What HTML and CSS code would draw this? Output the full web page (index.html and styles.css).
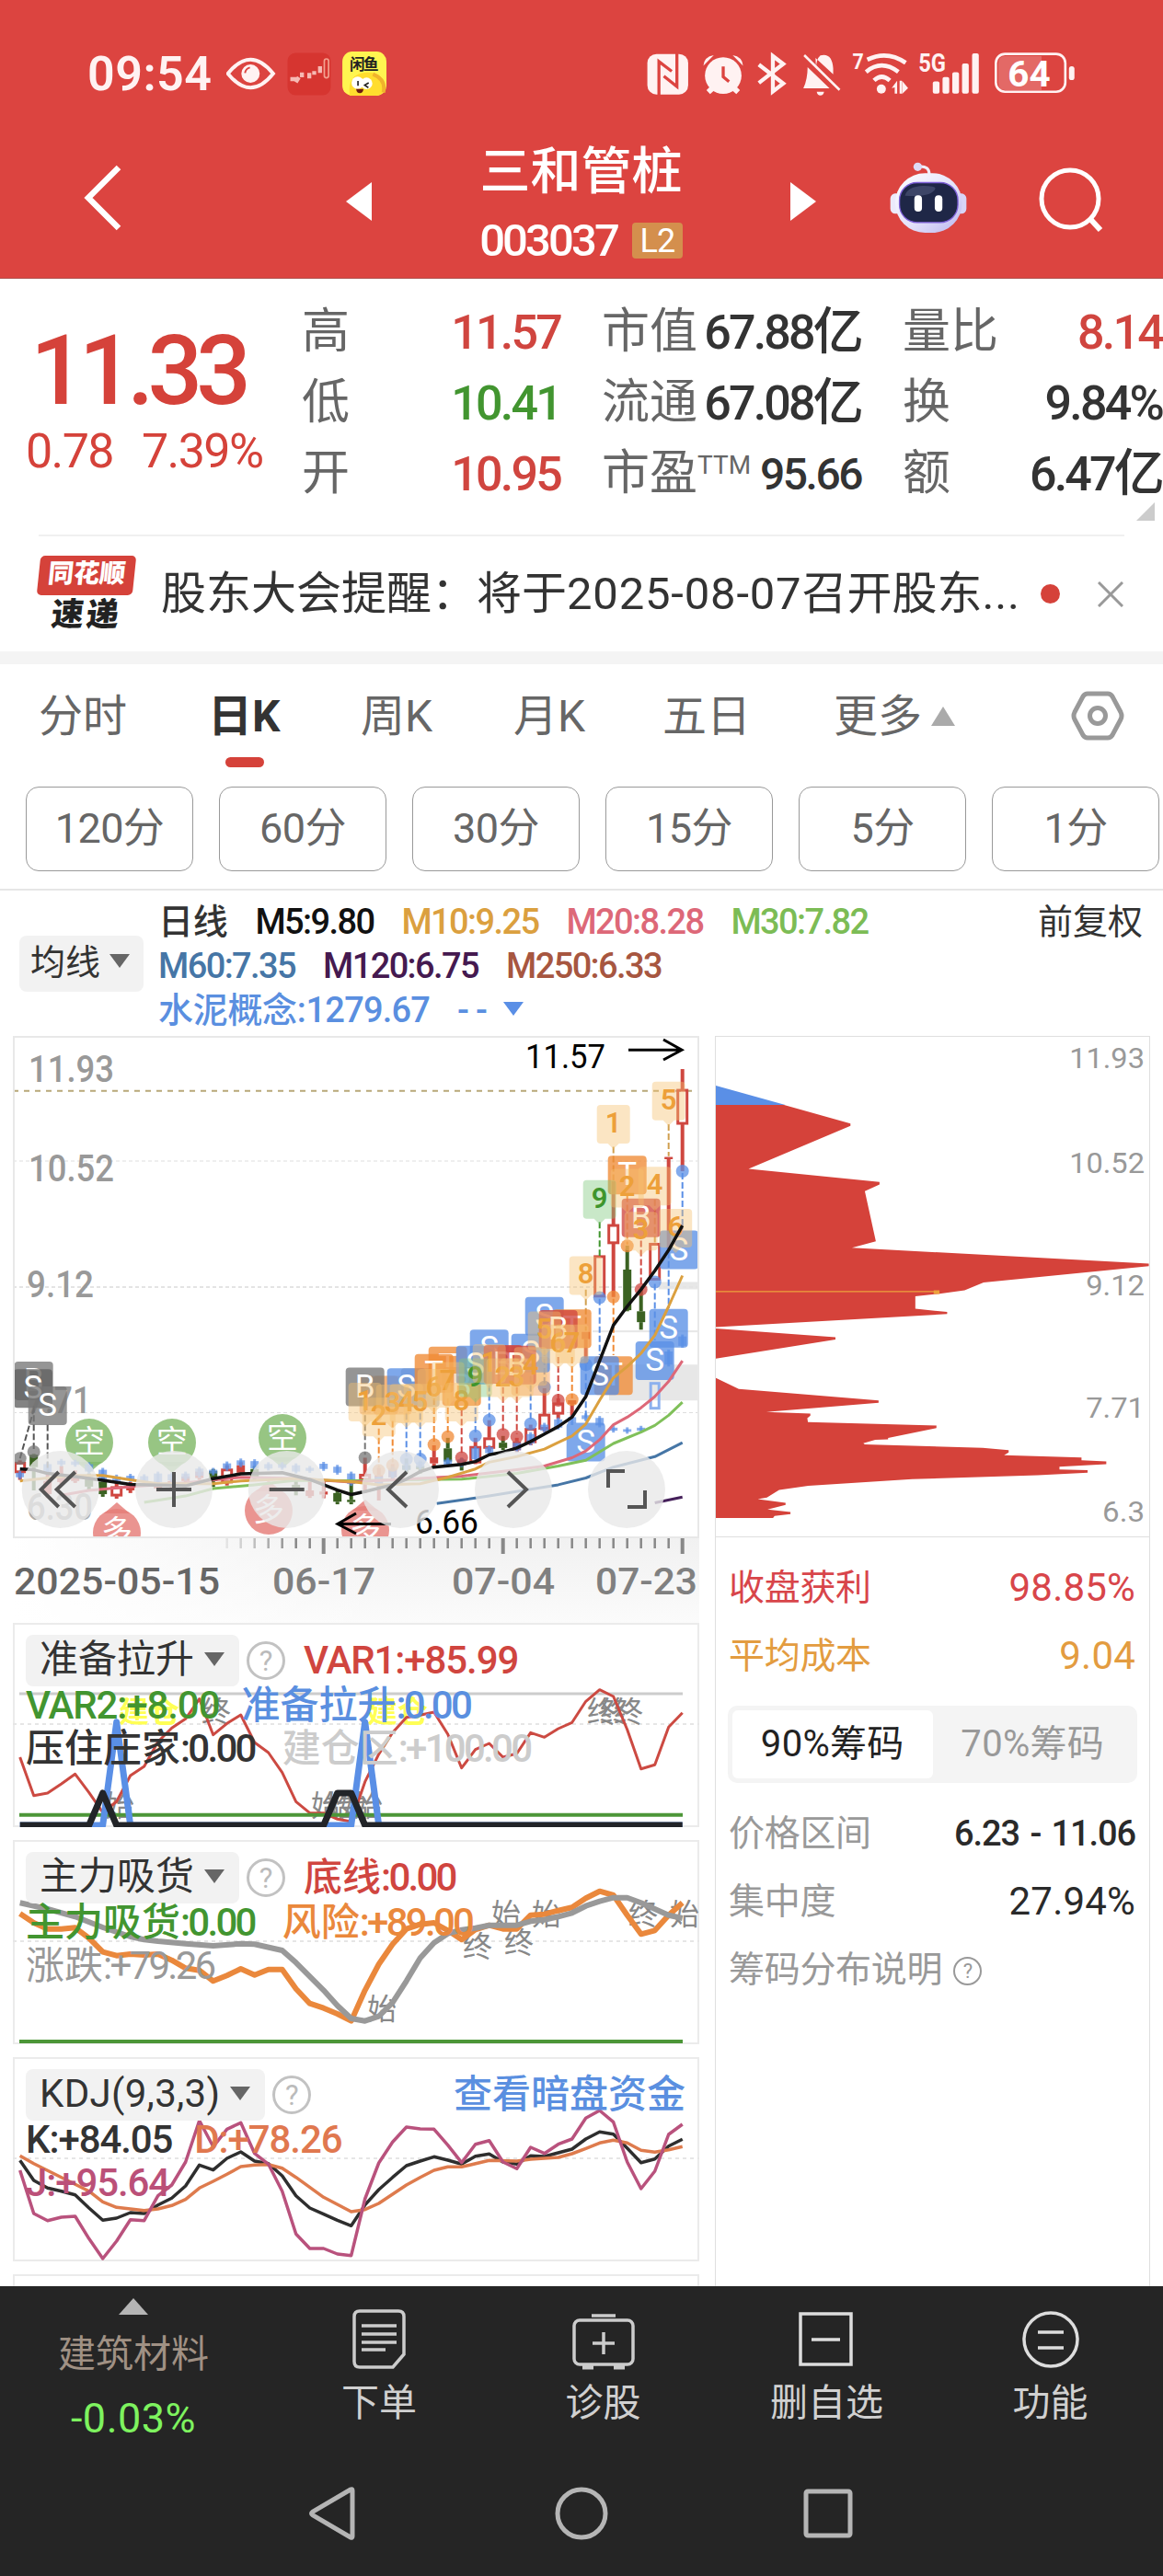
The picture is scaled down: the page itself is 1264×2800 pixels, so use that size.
FILE: index.html
```html
<!DOCTYPE html>
<html lang="zh-CN">
  <head>
    <meta charset="UTF-8">
    <title>三和管桩 003037</title>
    <link rel="stylesheet" href="styles.css">
  </head>
  <body>
    <div class="app">
      <header class="header">
        <div class="status">
          <span class="time">09:54</span>
          <svg class="status-left" viewBox="497 45 523 150">
            <path d="M502 120Q576 28 650 120Q576 212 502 120Z" fill="none" stroke="#fff2f2" stroke-width="12"/>
            <circle cx="576" cy="120" r="30" fill="#fff2f2"/>
            <path d="M558 118q2-14 16-18" fill="none" stroke="#dc4440" stroke-width="6"/>
            <rect x="697" y="52" width="141" height="139" rx="26" fill="#d63530"/>
            <path d="M706 138h22M724 148l10-16M744 116v16M768 118v18M784 112v12M803 96v22" stroke="#f6b9b3" stroke-width="13"/>
            <rect x="817" y="72" width="14" height="62" rx="7" fill="none" stroke="#f3a08f" stroke-width="5"/>
            <rect x="876" y="48" width="144" height="144" rx="32" fill="#fff550"/>
            <path d="M900 192q-10-74 58-76q54 0 56 50q-6 26-28 26z" fill="#ffdd2e"/>
            <path d="M976 122q44 18 34 60" fill="none" stroke="#f0b32c" stroke-width="12"/>
            <circle cx="926" cy="150" r="20" fill="#fff"/>
            <circle cx="955" cy="152" r="19" fill="#fff"/>
            <path d="M927 144v16M962 150l-13 8 12 8" fill="none" stroke="#222" stroke-width="5"/>
            <path d="M921 170h24q-2 14-12 14t-12-14z" fill="#6b1a12"/>
            <text x="900" y="108" font-size="50" font-weight="700" fill="#222" textLength="95">闲鱼</text>
          </svg>
          <svg class="status-right" viewBox="38 45 1404 148">
            <g fill="#fff2f2">
              <rect x="38" y="53" width="134" height="133" rx="30"/>
              <circle cx="287" cy="124" r="60"/>
              <path d="M222 92q2-30 34-35zM352 92q-2-30-34-35zM232 172l14-14 14 12-16 15zM342 172l-14-14-14 12 16 15z"/>
              <path d="M592 100q0-30 14-42 38-10 42 42v20l-58-54zM564 96q0 40-14 70h86z"/>
              <path d="M594 177h24q-2 12-12 12t-12-12z"/>
              <circle cx="806" cy="168" r="15"/>
              <path d="M840 165l18-24v42h-8v-20zM874 141l20 24-20 20zM866 141h7v42h-7z"/>
              <rect x="975" y="143" width="22" height="40" rx="6"/>
              <rect x="1007" y="129" width="22" height="54" rx="6"/>
              <rect x="1039" y="113" width="22" height="70" rx="6"/>
              <rect x="1071" y="84" width="22" height="99" rx="6"/>
              <rect x="1104" y="51" width="22" height="132" rx="6"/>
              <rect x="1422" y="93" width="18" height="46" rx="9"/>
              <text x="711" y="103" font-size="74" font-weight="700" textLength="37" lengthAdjust="spacingAndGlyphs">7</text>
              <text x="928" y="112" font-size="82" font-weight="700" textLength="90" lengthAdjust="spacingAndGlyphs">5G</text>
            </g>
            <g fill="none" stroke="#fff2f2" stroke-width="14">
              <path d="M404 88l80 62-34 26V60l34 26-80 62" stroke-width="13"/>
              <path d="M553 57l116 114" stroke-width="8"/>
              <path d="M760 72q64-32 126 10M756 112q50-42 106 0M782 140q25-24 52 0"/>
              <rect x="1182" y="53" width="228" height="124" rx="30" stroke-width="8"/>
            </g>
            <g fill="none" stroke="#dc4440" stroke-width="10">
              <path d="M76 190V78L118 110M135 48V160L92 126"/>
              <path d="M287 94v34l19 16"/>
            </g>
            <path d="M1212 60h120v112h-120q-22 0-22-24V84q0-24 22-24z" fill="#fff" opacity=".2"/>
            <text x="1221" y="160" font-size="118" font-weight="700" fill="#fff" textLength="140" lengthAdjust="spacingAndGlyphs">64</text>
          </svg>
        </div>
        <div class="nav">
          <svg class="back" viewBox="0 0 41 72"><path d="M38 3L5 36l33 33" fill="none" stroke="#fff" stroke-width="6.5"/></svg>
          <svg class="prev" viewBox="0 0 28 42"><path d="M28 0v42L0 21z" fill="#fff"/></svg>
          <div class="title">
            <h1>三和管桩</h1>
            <div class="code"><span>003037</span><em>L2</em></div>
          </div>
          <svg class="next" viewBox="0 0 28 42"><path d="M0 0v42l28-21z" fill="#fff"/></svg>
          <svg class="robot" viewBox="830 410 254 234">
            <defs>
              <linearGradient id="shell" x1="0" y1="0" x2="1" y2="1">
                <stop offset="0" stop-color="#fff"/><stop offset=".55" stop-color="#e4e2fa"/><stop offset="1" stop-color="#b9b4ee"/>
              </linearGradient>
            </defs>
            <path d="M928 424q32-2 32 26" fill="none" stroke="#f1eefc" stroke-width="9"/>
            <circle cx="922" cy="425" r="14" fill="#ded9f5"/>
            <rect x="832" y="513" width="36" height="66" rx="16" fill="#eceafb"/>
            <rect x="1046" y="513" width="36" height="66" rx="16" fill="#d8d5f6"/>
            <rect x="848" y="446" width="220" height="196" rx="98" fill="url(#shell)"/>
            <rect x="862" y="477" width="192" height="131" rx="58" fill="#1f2747" stroke="#7d5fd8" stroke-width="4"/>
            <path d="M880 520q8-30 60-32q40 0 40 8q-10 30-100 24z" fill="#5c6488" opacity=".5"/>
            <rect x="911" y="519" width="25" height="53" rx="12" fill="#fff"/>
            <rect x="978" y="519" width="25" height="53" rx="12" fill="#fff"/>
          </svg>
          <svg class="search" viewBox="0 0 70 72"><circle cx="34" cy="34" r="31" fill="none" stroke="#fff" stroke-width="5"/><path d="M55 55l12 13" stroke="#fff" stroke-width="6"/></svg>
        </div>
      </header>

      <section class="quote">
        <div class="price">
          <div class="last">11.33</div>
          <div class="change"><span>0.78</span><span>7.39%</span></div>
        </div>
        <div class="stats">
          <div><label>高</label><b class="up">11.57</b></div>
          <div><label>市值</label><b>67.88<u>亿</u></b></div>
          <div><label>量比</label><b class="up">8.14</b></div>
          <div><label>低</label><b class="down">10.41</b></div>
          <div><label>流通</label><b>67.08<u>亿</u></b></div>
          <div><label>换</label><b>9.84%</b></div>
          <div><label>开</label><b class="up">10.95</b></div>
          <div><label>市盈<sup>TTM</sup></label><b class="pe">95.66</b></div>
          <div><label>额</label><b>6.47<u>亿</u></b></div>
        </div>
        <i class="corner"></i>
      </section>

      <section class="news">
        <div class="news-logo">
          <span class="logo-top">同花顺</span>
          <span class="logo-bottom">速递</span>
        </div>
        <p>股东大会提醒：将于<span class="date">2025-08-07</span>召开股东<span class="date">...</span></p>
        <i class="dot"></i>
        <svg class="close" viewBox="0 0 28 28"><path d="M1 1l26 26M27 1L1 27" stroke="#999" stroke-width="3"/></svg>
      </section>

      <nav class="tabs">
        <span>分时</span>
        <span class="active">日K</span>
        <span>周K</span>
        <span>月K</span>
        <span>五日</span>
        <span>更多<i class="tri-up"></i></span>
        <svg class="hex" viewBox="0 0 58 54"><path d="M18 3h22q3 0 5 3l9 17q2 4 0 8l-9 17q-2 3-5 3H18q-3 0-5-3L4 31q-2-4 0-8l9-17q2-3 5-3z" fill="none" stroke="#999" stroke-width="5"/><circle cx="29" cy="27" r="8.5" fill="none" stroke="#999" stroke-width="5"/></svg>
      </nav>
      <div class="minutes">
        <span>120分</span><span>60分</span><span>30分</span><span>15分</span><span>5分</span><span>1分</span>
      </div>

      <section class="legend">
        <span class="pick">均线<i class="tri-down"></i></span>
        <div class="ma">
          <div><span class="cjk-dark">日线</span><span class="m5">M5:9.80</span><span class="m10">M10:9.25</span><span class="m20">M20:8.28</span><span class="m30">M30:7.82</span></div>
          <div><span class="m60">M60:7.35</span><span class="m120">M120:6.75</span><span class="m250">M250:6.33</span></div>
          <div><span class="idx">水泥概念:<span class="n">1279.67</span></span><span class="idx dash">--<i class="tri-down blue"></i></span></div>
        </div>
        <span class="adjust">前复权</span>
      </section>

      <main class="charts">
        <div class="left">
          <svg class="kline" id="kline" viewBox="0 0 746 546"></svg>
          <svg class="axis" id="axis" viewBox="0 0 746 92"></svg>

          <div class="panel">
            <svg id="pull" viewBox="0 0 746 222"></svg>
            <div class="row first"><span class="pick">准备拉升<i class="tri-down"></i></span><i class="help">?</i><span class="red w">VAR1:+85.99</span></div>
            <div class="row"><span class="green w">VAR2:+8.00</span><span class="blue-t">准备拉升<span class="n">:0.00</span></span></div>
            <div class="row wide"><span>压住庄家<span class="n">:0.00</span></span><span class="light">建仓区<span class="n">:+100.00</span></span></div>
          </div>

          <div class="panel">
            <svg id="main-force" viewBox="0 0 746 222"></svg>
            <div class="row first"><span class="pick">主力吸货<i class="tri-down"></i></span><i class="help">?</i><span class="red">底线<span class="n">:0.00</span></span></div>
            <div class="row wide"><span class="green">主力吸货<span class="n">:0.00</span></span><span class="orange">风险<span class="n">:+89.00</span></span></div>
            <div class="row"><span class="gray">涨跌<span class="n">:+79.26</span></span></div>
          </div>

          <div class="panel">
            <svg id="kdj" viewBox="0 0 746 222"></svg>
            <div class="row first"><span class="pick kdj-pick">KDJ(9,3,3)<i class="tri-down"></i></span><i class="help">?</i><span class="blue-t link">查看暗盘资金</span></div>
            <div class="row"><span class="w">K:+84.05</span><span class="d w">D:+78.26</span></div>
            <div class="row"><span class="j w">J:+95.64</span></div>
          </div>

          <div class="panel"></div>
        </div>

        <aside class="chips">
          <svg class="chip-chart" viewBox="0 0 472 543">
            <g transform="translate(-17.7 -6.5) scale(.3333 .3571)">
              <path fill="#5a8fe6" d="M53 165L280 224H53z"/>
              <path fill="#d5423a" d="M53 224H276L493 281V288L160 419L588 459V467L540 487L576 640L498 660L1468 708V716L928 766L866 790L784 800L705 808V846L809 856V862L53 902zM53 906L444 933V940L53 998zM53 1057L128 1091L585 1126V1133L218 1161L362 1166V1172L352 1180L354 1192L774 1202V1210L616 1240V1244L574 1246L535 1256L540 1260L925 1270L1010 1277V1284L995 1293L1248 1300V1308L1329 1312V1320L1176 1328V1336L1268 1338V1346L1105 1354L695 1366L355 1386L260 1399L220 1422L190 1427L281 1438V1444L222 1458L297 1466V1472L245 1478L240 1484H53z"/>
              <path fill="#eda23c" d="M53 792H765V790H784V801H765V795H53z"/>
            </g>
            <g class="chip-label">
              <text x="385" y="34" textLength="82" lengthAdjust="spacingAndGlyphs">11.93</text>
              <text x="385" y="148" textLength="82" lengthAdjust="spacingAndGlyphs">10.52</text>
              <text x="403" y="281" textLength="64" lengthAdjust="spacingAndGlyphs">9.12</text>
              <text x="403" y="414" textLength="64" lengthAdjust="spacingAndGlyphs">7.71</text>
              <text x="421" y="528" textLength="46" lengthAdjust="spacingAndGlyphs">6.3</text>
            </g>
          </svg>
          <div class="chip-info">
            <div class="line red"><span>收盘获利</span><b>98.85%</b></div>
            <div class="line amber"><span>平均成本</span><b>9.04</b></div>
            <div class="switch"><span class="on">90%筹码</span><span>70%筹码</span></div>
            <div class="line"><span>价格区间</span><b class="range">6.23 - 11.06</b></div>
            <div class="line"><span>集中度</span><b>27.94%</b></div>
            <div class="line"><span>筹码分布说明<i class="help small">?</i></span></div>
          </div>
        </aside>
      </main>

      <footer class="footer">
        <div class="toolbar">
          <div class="sector"><i class="tri-up"></i><span>建筑材料</span><b>-0.03%</b></div>
          <div class="tool">
            <svg viewBox="0 0 70 70"><g fill="none" stroke="#ccc" stroke-width="3.5"><path d="M14 5h42q6 0 6 6v41L50 66H14q-6 0-6-6V11q0-6 6-6z"/><path d="M16 21h38M16 30h38M16 39h38M16 47h26"/></g></svg>
            <span>下单</span>
          </div>
          <div class="tool">
            <svg viewBox="0 0 70 70"><g fill="none" stroke="#ccc" stroke-width="3.5"><rect x="3" y="15" width="64" height="48" rx="6"/><path d="M22 10h26M35 28v24M23 40h24"/><path d="M12 66h12M46 66h12" stroke-width="5"/></g></svg>
            <span>诊股</span>
          </div>
          <div class="tool">
            <svg viewBox="0 0 70 70"><g fill="none" stroke="#ddd" stroke-width="3.5"><path d="M6 8h55v55H6zM18 36h31"/></g></svg>
            <span>删自选</span>
          </div>
          <div class="tool">
            <svg viewBox="0 0 70 70"><g fill="none" stroke="#ddd" stroke-width="3.5"><circle cx="35" cy="36" r="29"/><path d="M21 28h28M21 45h28"/></g></svg>
            <span>功能</span>
          </div>
        </div>
        <div class="system">
          <svg viewBox="0 0 58 62"><path d="M50 6v50q0 2-2 1L7 33q-3-2 0-4L48 5q2-1 2 1z"/></svg>
          <svg viewBox="0 0 58 62"><circle cx="29" cy="31" r="26"/></svg>
          <svg viewBox="0 0 58 62"><rect x="3" y="7" width="48" height="48" rx="2"/></svg>
        </div>
      </footer>
    </div>
    <script src="chart.js"></script>
  </body>
</html>
```
FILE: styles.css
```css
html, body {
  margin: 0;
}

body {
  font-family: Roboto, "Noto Sans CJK SC", sans-serif;
  color: #333;
  background: #fff;
}

i, em, u {
  font-style: normal;
  text-decoration: none;
}

svg {
  display: block;
  flex: none;
}

svg text {
  font-family: Roboto, "Noto Sans CJK SC", sans-serif;
}

.app {
  width: 1264px;
  height: 2800px;
  display: flex;
  flex-direction: column;
  overflow: hidden;
}

.n {
  letter-spacing: -0.065em;
}

.w {
  letter-spacing: -1.1px;
}

/* header */
.header {
  height: 303px;
  flex: none;
  background: #dc4440;
  border-bottom: 1px solid #b0504c;
  box-sizing: border-box;
  color: #fff;
}

.status {
  height: 160px;
  display: flex;
  align-items: center;
  padding: 0 94px 0 95px;
}

.time {
  width: 151px;
  font-size: 52px;
  font-weight: 600;
  letter-spacing: 0.5px;
  color: #fff2f2;
}

.status-left {
  width: 174px;
  height: 50px;
}

.status-right {
  width: 468px;
  height: 49px;
  margin-left: auto;
}

.nav {
  height: 142px;
  display: flex;
  padding-left: 91px;
}

.back {
  width: 41px;
  height: 72px;
  margin-top: 19px;
}

.prev, .next {
  width: 28px;
  height: 42px;
  margin-top: 38px;
}

.prev {
  margin-left: 244px;
}

.title {
  width: 455px;
  text-align: center;
}

.title h1 {
  margin: -8px 0 0;
  font-size: 55px;
  line-height: 68px;
  font-weight: 500;
}

.code {
  display: flex;
  justify-content: center;
  align-items: center;
  gap: 16px;
  height: 46px;
  margin-top: 18px;
  font-size: 49px;
  font-weight: 500;
  letter-spacing: -2.9px;
}

.code em {
  width: 55px;
  height: 39px;
  line-height: 41px;
  border-radius: 4px;
  background: #d48f4d;
  font-size: 36px;
  font-weight: 400;
  letter-spacing: -1px;
}

.robot {
  width: 84px;
  height: 78px;
  margin: 16px 0 0 80px;
}

.search {
  width: 70px;
  height: 72px;
  margin: 22px 0 0 78px;
}

/* quote */
.quote {
  height: 278px;
  flex: none;
  position: relative;
  display: flex;
}

.price {
  width: 328px;
  color: #d5423a;
}

.last {
  margin: 38px 0 0 33px;
  font-size: 105px;
  line-height: 126px;
  font-weight: 500;
  letter-spacing: -7px;
}

.change {
  display: flex;
  gap: 31px;
  margin-left: 28px;
  font-size: 52px;
  line-height: 60px;
  margin-top: -6px;
  letter-spacing: -1.6px;
}

.stats {
  display: grid;
  grid-template-columns: 281px 282px 282px;
  grid-auto-rows: 77px;
  column-gap: 45px;
  margin-top: 18px;
  line-height: 60px;
}

.stats div {
  display: flex;
  justify-content: space-between;
  align-items: center;
  white-space: nowrap;
}

.stats label {
  padding-top: 3px;
  font-size: 52px;
  color: #666;
}

.stats sup {
  font-size: 28px;
  vertical-align: 17px;
  line-height: 0;
}

.stats b {
  padding-top: 4px;
  font-size: 52px;
  font-weight: 500;
  letter-spacing: -2.8px;
}

.stats u {
  font-size: 55px;
  line-height: 0;
}

.stats .pe {
  font-size: 48px;
  letter-spacing: -2.5px;
}

.up, .red {
  color: #d0453f;
}

.down, .green {
  color: #429530;
}

.corner {
  position: absolute;
  right: 9px;
  bottom: 15px;
  border: 10px solid transparent;
  border-right-color: #ccc;
  border-bottom-color: #ccc;
}

/* news */
.news {
  height: 125px;
  flex: none;
  display: flex;
  align-items: center;
  margin: 0 42px;
  border-top: 2px solid #f0f0f0;
}

.news-logo {
  width: 104px;
  height: 84px;
  text-align: center;
  font-weight: 900;
  line-height: 40px;
}

.logo-top, .logo-bottom {
  display: block;
  transform: skewX(-6deg);
}

.logo-top {
  height: 43px;
  border-radius: 5px;
  background: #d5423a;
  color: #fff;
  font-size: 28px;
}

.logo-bottom {
  font-size: 35px;
  line-height: 44px;
  letter-spacing: 3px;
  color: #222;
}

.news p {
  width: 946px;
  margin: 0 0 0 29px;
  font-size: 49px;
  line-height: 60px;
  white-space: nowrap;
}

.date {
  letter-spacing: 0.8px;
}

.dot {
  width: 21px;
  height: 21px;
  border-radius: 50%;
  background: #d5423a;
  margin-left: 10px;
}

.close {
  width: 28px;
  height: 28px;
  margin-left: 41px;
}

/* tabs */
.tabs {
  height: 118px;
  flex: none;
  display: flex;
  border-top: 14px solid #f4f4f4;
  padding-left: 42px;
  font-size: 48px;
  line-height: 114px;
  color: #666;
}

.tabs span {
  position: relative;
  width: 96px;
  margin-right: 88px;
  white-space: nowrap;
}

.tabs span:nth-child(2), .tabs span:nth-child(3) {
  width: 80px;
  margin-right: 86px;
}

.tabs span:nth-child(4) {
  width: 80px;
  margin-right: 82px;
}

.tabs span:nth-child(5) {
  margin-right: 90px;
}

.tabs .active {
  color: #333;
  font-weight: 700;
}

.tabs .active::after {
  content: "";
  position: absolute;
  left: 19px;
  top: 101px;
  width: 42px;
  height: 11px;
  border-radius: 6px;
  background: #d5423a;
}

.tri-up, .tri-down {
  display: inline-block;
  border: 11px solid transparent;
  border-top: 0;
  border-bottom: 15px solid #aaa;
}

.tri-down {
  border-bottom: 0;
  border-top: 15px solid #666;
  vertical-align: 7px;
}

.tabs .tri-up {
  border-width: 0 13px 21px;
  margin-left: 10px;
  vertical-align: 6px;
}

.hex {
  width: 58px;
  height: 54px;
  margin: 29px 0 0 74px;
}

.minutes {
  height: 128px;
  flex: none;
  display: flex;
  gap: 28px;
  padding: 15px 0 0 28px;
  box-sizing: border-box;
  border-bottom: 2px solid #e6e6e6;
  overflow: hidden;
}

.minutes span {
  flex: none;
  box-sizing: border-box;
  width: 182px;
  height: 92px;
  border: 1.5px solid #999;
  border-radius: 14px;
  text-align: center;
  line-height: 90px;
  font-size: 45px;
  letter-spacing: -0.6px;
  color: #666;
}

/* moving averages */
.legend {
  height: 158px;
  flex: none;
  display: flex;
  padding: 10px 22px 0 21px;
  box-sizing: border-box;
  font-size: 38px;
}

.legend .pick {
  width: 135px;
  height: 61px;
  line-height: 59px;
  margin: 39px 16px 0 0;
  padding-left: 12px;
  box-sizing: border-box;
  font-size: 38px;
}

.legend .pick .tri-down {
  margin-left: 10px;
}

.pick {
  background: #f2f2f2;
  border-radius: 8px;
  white-space: nowrap;
}

.ma {
  flex: 1;
  font-weight: 500;
}

.ma > div {
  display: flex;
  gap: 30px;
  height: 48px;
  line-height: 48px;
  letter-spacing: -1.6px;
}

.ma .idx, .ma .cjk-dark {
  letter-spacing: -0.3px;
}

.ma .idx .n {
  letter-spacing: -0.8px;
}

.ma .dash {
  letter-spacing: 7px;
}

.m5 { color: #111; }
.m10 { color: #dba03f; }
.m20 { color: #dd6878; }
.m30 { color: #7cbc55; }
.m60 { color: #4676a6; }
.m120 { color: #451a50; }
.m250 { color: #a75640; }
.idx { color: #5a8fe0; }

.tri-down.blue {
  border-top-color: #5a8fe6;
  margin-left: 10px;
}

.adjust {
  line-height: 48px;
}

/* charts */
.charts {
  flex: 1;
  min-height: 0;
  overflow: hidden;
  display: grid;
  grid-template-columns: 746px 473px;
  column-gap: 17px;
  padding-left: 14px;
}

.kline {
  width: 746px;
  height: 546px;
}

.axis {
  width: 746px;
  height: 92px;
  background: linear-gradient(90deg, #fff, rgba(255, 255, 255, 0) 55%), linear-gradient(#f1f1f1, #fbfbfb);
}

.panel {
  position: relative;
  box-sizing: border-box;
  height: 222px;
  margin-bottom: 14px;
  border: 2px solid #ebebeb;
  padding: 11px 0 0 12px;
  font-size: 42px;
  font-weight: 500;
}

.panel svg {
  position: absolute;
  left: -2px;
  top: -2px;
  width: 746px;
  height: 222px;
}

.row {
  position: relative;
  display: flex;
  gap: 24px;
  height: 47px;
  line-height: 42px;
  white-space: nowrap;
}

.row.wide {
  gap: 30px;
}

.row.first {
  height: 56px;
  line-height: 54px;
  gap: 8px;
  align-items: center;
}

.first .pick {
  padding: 0 16px 0 15px;
  height: 56px;
  font-weight: 400;
}

.first .pick .tri-down {
  margin-left: 11px;
}

.kdj-pick {
  letter-spacing: 0.3px;
}

.first .help + span {
  margin-left: 12px;
}

.first .link {
  margin-left: auto !important;
  margin-right: 13px;
}

.help {
  width: 36px;
  height: 36px;
  flex: none;
  line-height: 37px;
  border: 3px solid #c2c2c2;
  border-radius: 50%;
  text-align: center;
  font-size: 31px;
  font-weight: 400;
  color: #bbb;
}

.blue-t { color: #5a8fe0; }
.light { color: #ccc; }
.orange { color: #ea883c; }
.gray { color: #999; font-weight: 400; }
.d { color: #e0784f; }
.j { color: #bb5078; }

/* chip distribution */
.chips {
  border: 1px solid #dfdfdf;
  border-bottom: 0;
  box-sizing: border-box;
}

.chip-chart {
  width: 471px;
  height: 543px;
  border-bottom: 1px solid #dfdfdf;
}

.chip-label {
  fill: #999;
  font-size: 32px;
}

.chip-info {
  padding: 18px 13px 0;
  font-size: 39px;
  color: #999;
}

.line {
  display: flex;
  justify-content: space-between;
  height: 74px;
  line-height: 74px;
  padding: 0 2px 0 1px;
  letter-spacing: -0.3px;
}

.line b {
  font-weight: 400;
  font-size: 42px;
  letter-spacing: 0.2px;
  color: #2a2a2a;
}

.line .range {
  font-weight: 500;
  font-size: 38px;
  letter-spacing: -1.1px;
  word-spacing: 3px;
}

.line.red, .line.red b {
  color: #d8454a;
}

.line.amber, .line.amber b {
  color: #e39c40;
}

.switch {
  display: flex;
  box-sizing: border-box;
  height: 84px;
  margin: 17px 0 18px;
  padding: 5px;
  border-radius: 10px;
  background: #f4f4f4;
}

.switch span {
  flex: 1;
  line-height: 74px;
  text-align: center;
  font-size: 40px;
  letter-spacing: 0.3px;
}

.switch .on {
  border-radius: 6px;
  background: #fff;
  color: #222;
}

.help.small {
  display: inline-block;
  width: 27px;
  height: 27px;
  line-height: 28px;
  border-width: 2px;
  border-color: #999;
  color: #999;
  font-size: 22px;
  margin-left: 12px;
  vertical-align: 4px;
}

/* bottom */
.footer {
  height: 315px;
  flex: none;
  background: #252525;
}

.toolbar {
  display: grid;
  grid-template-columns: 290px 244px 243px 243px 243px;
  height: 185px;
}

.tool, .sector {
  display: flex;
  flex-direction: column;
  align-items: center;
  font-size: 41px;
  line-height: 50px;
  color: #d0d0d0;
}

.tool svg {
  width: 70px;
  height: 70px;
  margin: 22px 0 10px;
}

.sector .tri-up {
  border-width: 0 16px 18px;
  border-bottom-color: #b5b5b5;
  margin: 13px 0 18px;
}

.sector span {
  color: #a09184;
}

.sector b {
  margin-top: 20px;
  font-size: 45px;
  font-weight: 400;
  letter-spacing: 0.5px;
  color: #7ef35f;
}

.system {
  display: flex;
  padding: 31px 0 0 333px;
  gap: 212px;
}

.system svg {
  width: 58px;
  height: 62px;
  fill: none;
  stroke: #b5b5b5;
  stroke-width: 5;
}
```
FILE: chart.js
```js
(function() {
  var NS = 'http://www.w3.org/2000/svg';
  var RED = '#cf4740', GREEN = '#3b6222', BLUE = '#5a8fe6', ORANGE = '#f08a35', GRAY = '#777';

  function el(parent, name, attrs, text) {
    var node = document.createElementNS(NS, name);
    for (var k in attrs) node.setAttribute(k, attrs[k]);
    if (text) node.textContent = text;
    parent.appendChild(node);
    return node;
  }

  function x(i) { return 7.7 + 15 * i; }

  // points: [index, level, index, level, ...]
  function curve(svg, points, y, color, width) {
    var d = '';
    for (var i = 0; i < points.length; i += 2) {
      d += (i ? 'L' : 'M') + x(points[i]).toFixed(1) + ' ' + y(points[i + 1]).toFixed(1);
    }
    el(svg, 'path', { d: d, fill: 'none', stroke: color, 'stroke-width': width, 'stroke-linejoin': 'round' });
  }

  // one level per candle
  function series(svg, levels, y, color, width) {
    var points = [];
    levels.forEach(function(v, i) { points.push(i, v); });
    curve(svg, points, y, color, width);
  }

  function hline(svg, y, color, width, dash, x1, x2) {
    el(svg, 'line', { x1: x1 || 0, x2: x2 || 746, y1: y, y2: y, stroke: color, 'stroke-width': width, 'stroke-dasharray': dash || 'none' });
  }

  function label(svg, str, lx, ly, size, color, length, weight) {
    var attrs = { x: lx, y: ly, 'font-size': size, fill: color, 'font-weight': weight || 400 };
    if (length) {
      attrs.textLength = length;
      attrs.lengthAdjust = 'spacingAndGlyphs';
    } else {
      attrs['text-anchor'] = 'middle';
    }
    el(svg, 'text', attrs, str);
  }

  /* ---- candles ---- */
  var k = document.getElementById('kline');
  function y(v) { return v / 2.45 - 6; }

  el(k, 'rect', { x: 648, y: y(890), width: 96, height: 39, fill: '#e7e7e7' });
  el(k, 'rect', { x: 702, y: y(670), width: 42, height: 8, fill: '#e7e7e7' });
  el(k, 'rect', { x: 630, y: y(799), width: 114, height: 2, fill: '#e7e7e7' });
  hline(k, 136, '#dedede', 1, '4 3');
  hline(k, 273, '#e4e4e4', 2, '4 3');
  hline(k, 409.5, '#dedede', 1, '4 3');
  hline(k, 59.7, '#b8a878', 2, '6 6');
  label(k, '11.93', 17, 50, 40, '#999', 93, 500);
  label(k, '10.52', 17, 158, 40, '#999', 93, 500);
  label(k, '9.12', 15, 284, 40, '#999', 73, 500);
  label(k, '7.71', 15, 410, 40, '#999', 70, 500);
  label(k, '6.30', 15, 526, 40, '#aaa', 72, 500);

  // square mark with a letter
  function badge(i, top, letter, color) {
    var cx = x(i), ty = y(top);
    el(k, 'rect', { x: cx - 21, y: ty, width: 42, height: 42, rx: 4, fill: color, opacity: letter ? 0.78 : 0.4 });
    if (letter) label(k, letter, cx, ty + 32, 35, '#fff', 0, 400);
  }

  // day counter bubble
  function count(i, mid, str, green, shift) {
    var cx = x(i) + (shift || 0), ty = y(mid) - 19;
    el(k, 'path', {
      d: 'M' + (cx - 14) + ' ' + ty + 'h28q4 0 4 4v34q0 4-4 4h-8l-6 6-6-6h-8q-4 0-4-4v-34q0-4 4-4z',
      fill: green ? '#7fc77b' : '#f6c070', opacity: 0.42
    });
    label(k, str, cx, y(mid) + 11, 31, green ? '#3f952d' : '#eda03a', 0, 600);
  }

  function stem(i, from, to, color) {
    el(k, 'line', { x1: x(i), x2: x(i), y1: y(from), y2: y(to), stroke: color, 'stroke-width': 2, 'stroke-dasharray': '7 3' });
  }

  function ring(i, at, color) {
    el(k, 'circle', { cx: x(i), cy: y(at), r: 7, fill: color, opacity: 0.75 });
  }

  function candle(i, high, top, bottom, low, color, hollow) {
    var cx = x(i);
    el(k, 'line', { x1: cx, x2: cx, y1: y(high), y2: y(top), stroke: color, 'stroke-width': 4 });
    el(k, 'line', { x1: cx, x2: cx, y1: y(bottom), y2: y(low), stroke: color, 'stroke-width': 4 });
    el(k, 'rect', {
      x: cx - (hollow ? 5 : 4.5), y: y(top) + (hollow ? 1 : 0), width: hollow ? 10 : 9,
      height: Math.max(2, (bottom - top) / 2.45 - (hollow ? 2 : 0)),
      fill: hollow ? 'none' : color, stroke: hollow ? color : 'none', 'stroke-width': 3
    });
  }

  function signal(cx, cy, str, color, up) {
    var t = up ? -1 : 1;
    el(k, 'circle', { cx: cx, cy: cy, r: 26, fill: color, opacity: 0.82 });
    el(k, 'path', { d: 'M' + (cx - 14) + ' ' + (cy + 21 * t) + 'L' + cx + ' ' + (cy + 33 * t) + 'L' + (cx + 14) + ' ' + (cy + 21 * t) + 'z', fill: color, opacity: 0.82 });
    label(k, str, cx, cy + 11, 34, '#fff', 0, 400);
  }

  signal(83, 442, '空', '#80b868');
  signal(173, 442, '空', '#80b868');
  signal(293, 437, '空', '#80b868');
  signal(113, 540, '多', '#e57d78', true);
  signal(278, 516, '多', '#e57d78', true);
  signal(383, 537, '多', '#e57d78', true);

  [
    [0, 1145, 1150, 1178, 1197, RED, 1], [1, 1128, 1130, 1163, 1225, GREEN], [2, 1180, 1200, 1235, 1245, RED],
    [3, 1160, 1185, 1203, 1210, RED], [4, 1172, 1185, 1200, 1205, RED], [5, 1180, 1190, 1215, 1225, GREEN],
    [6, 1190, 1202, 1235, 1242, GREEN], [7, 1200, 1215, 1240, 1247, RED, 1], [8, 1203, 1208, 1225, 1232, RED],
    [10, 1200, 1206, 1220, 1228, RED], [11, 1195, 1200, 1212, 1220, RED], [12, 1182, 1188, 1200, 1206, RED], [13, 1168, 1175, 1192, 1197, RED],
    [14, 1168, 1173, 1200, 1216, GREEN], [15, 1158, 1168, 1205, 1212, RED, 1], [16, 1150, 1158, 1178, 1182, RED],
    [17, 1160, 1168, 1190, 1198, GREEN], [20, 1195, 1210, 1222, 1238, GREEN], [21, 1200, 1225, 1240, 1245, RED],
    [22, 1200, 1228, 1236, 1246, RED], [23, 1225, 1232, 1255, 1262, GREEN], [24, 1195, 1250, 1256, 1262, GREEN],
    [25, 1138, 1182, 1198, 1232, RED, 1], [26, 1165, 1185, 1210, 1252, RED], [27, 1155, 1170, 1190, 1198, RED],
    [28, 1140, 1158, 1170, 1178, GREEN], [29, 1148, 1160, 1168, 1180, GREEN],
    [30, 1105, 1137, 1153, 1162, RED], [31, 1085, 1113, 1148, 1155, GREEN], [32, 1140, 1145, 1158, 1172, GREEN],
    [33, 1085, 1108, 1152, 1155, RED, 1], [34, 1038, 1085, 1113, 1122, RED, 1], [35, 1080, 1098, 1112, 1118, GREEN],
    [36, 1085, 1095, 1118, 1123, RED], [37, 1050, 1060, 1098, 1105, RED, 1], [38, 953, 1022, 1062, 1068, RED, 1],
    [39, 980, 992, 1022, 1035, RED, 1], [40, 985, 985, 995, 1032, RED], [41, 803, 803, 822, 888, RED],
    [42, 600, 600, 710, 710, RED, 1], [43, 402, 517, 568, 710, RED, 1], [44, 573, 637, 745, 748, GREEN],
    [45, 690, 748, 777, 797, GREEN], [46, 567, 567, 665, 665, RED, 1], [47, 337, 337, 343, 582, RED],
    [48, 103, 157, 250, 375, RED, 1]
  ].forEach(function(c) { candle.apply(null, c); });

  // index overlay
  [[0, 1178, 1190], [2, 1155, 1178], [3, 1146, 1156], [4, 1148, 1157], [5, 1155, 1175], [6, 1170, 1196], [7, 1188, 1200], [8, 1186, 1198],
    [9, 1187, 1202], [10, 1180, 1203], [11, 1182, 1198], [12, 1180, 1194], [13, 1167, 1186], [14, 1170, 1180], [15, 1153, 1168], [16, 1145, 1158],
    [17, 1147, 1166], [18, 1155, 1167], [19, 1155, 1165], [20, 1158, 1175], [21, 1165, 1173], [22, 1154, 1168],
    [23, 1162, 1178], [24, 1180, 1208], [26, 1188, 1210], [27, 1165, 1190], [28, 1158, 1170], [29, 1150, 1165],
    [31, 1143, 1158], [32, 1142, 1158], [33, 1112, 1142], [34, 1110, 1126], [36, 1098, 1118], [37, 1075, 1100],
    [38, 1050, 1066], [39, 1036, 1058], [40, 1030, 1046], [41, 1025, 1035], [42, 1032, 1052], [43, 1058, 1066],
    [44, 1062, 1069], [45, 1058, 1066], [47, 855, 890], [48, 815, 840]
  ].forEach(function(b) {
    el(k, 'rect', { x: x(b[0]) - 4.5, y: y(b[1]), width: 9, height: (b[2] - b[1]) / 2.45, fill: BLUE, opacity: 0.72 });
    el(k, 'line', { x1: x(b[0]), x2: x(b[0]), y1: y(b[1] - 5), y2: y(b[2] + 5), stroke: BLUE, 'stroke-width': 3, opacity: 0.72 });
  });
  el(k, 'rect', { x: x(46) - 4.5, y: y(940), width: 9, height: 27, fill: 'none', stroke: '#8db1ee', 'stroke-width': 3 });

  // stems between a candle and its badges
  el(k, 'line', { x1: x(0), y1: y(1140), x2: x(1), y2: y(1010), stroke: '#555', 'stroke-width': 2, 'stroke-dasharray': '7 3' });
  [[1, 1000, 1115, '#555'], [2, 1050, 1165, '#555'], [25, 1000, 1130, '#777'], [26, 1060, 1165, ORANGE], [27, 1040, 1150, ORANGE],
    [28, 1020, 1135, BLUE], [29, 1020, 1140, BLUE], [30, 980, 1095, ORANGE], [31, 980, 1075, ORANGE],
    [32, 1010, 1130, RED], [33, 980, 1070, BLUE], [34, 920, 1030, BLUE], [35, 950, 1070, RED], [36, 950, 1075, RED],
    [37, 920, 1040, BLUE], [38, 850, 940, BLUE], [39, 870, 980, RED], [40, 870, 980, ORANGE], [41, 690, 800, '#d0a050'], [41, 890, 1040, BLUE],
    [42, 510, 600, '#3f952d'], [42, 715, 865, BLUE], [43, 310, 400, '#d0a050'], [43, 715, 865, ORANGE],
    [44, 440, 570, ORANGE], [45, 560, 690, RED], [46, 450, 565, '#d0a050'], [46, 675, 825, BLUE], [47, 250, 335, '#d0a050'],
    [47, 590, 740, BLUE], [48, 380, 530, BLUE]
  ].forEach(function(s) { stem.apply(null, s); });

  [[0, 1140, GRAY], [1, 1122, GRAY], [25, 1138, GRAY], [26, 1172, ORANGE], [27, 1158, ORANGE], [28, 1142, BLUE], [29, 1142, BLUE],
    [30, 1103, ORANGE], [31, 1082, ORANGE], [32, 1138, RED], [33, 1080, BLUE], [34, 1038, BLUE],
    [35, 1076, RED], [36, 1082, RED], [37, 1048, BLUE], [38, 950, BLUE], [39, 985, RED], [40, 983, ORANGE],
    [41, 890, BLUE], [42, 712, BLUE], [43, 710, ORANGE], [44, 574, ORANGE], [45, 690, RED], [46, 670, BLUE], [48, 375, BLUE]
  ].forEach(function(r) { ring.apply(null, r); });

  [[26, 920, '', ORANGE], [27, 920, '', ORANGE], [29, 900, '', GRAY], [37, 870, '', ORANGE],
    [1, 882, 'B', GRAY], [0.95, 902, 'S', '#606060'], [2, 948, 'S', GRAY], [25, 898, 'B', GRAY],
    [28, 900, 'S', BLUE], [31, 842, 'T', ORANGE], [30, 862, 'T', ORANGE], [32, 897, 'B', ORANGE],
    [34, 797, 'S', BLUE], [33, 840, 'S', BLUE], [37, 808, 'S', BLUE], [35, 838, 'B', RED], [36, 840, 'B', RED],
    [38, 710, 'S', BLUE], [40, 743, 'T', ORANGE], [39, 745, 'B', RED], [43, 868, 'T', ORANGE], [42, 868, 'S', BLUE],
    [41, 1045, 'S', BLUE], [46, 828, 'S', BLUE], [47, 742, 'S', BLUE], [47.75, 533, 'S', BLUE],
    [44, 334, 'T', ORANGE], [45, 448, 'B', RED]
  ].forEach(function(b) { badge.apply(null, b); });

  [[25, 985, '1'], [26, 1025, '2'], [27, 990, '3'], [28, 988, '4'], [29, 988, '5'], [30, 948, '6'], [31, 930, '7'],
    [32, 985, '8'], [33, 920, '9', true], [34, 882, '1'], [35, 920, '2'], [36, 920, '3'], [37, 890, '4'],
    [38, 795, '5'], [39, 830, '6'], [40, 830, '7'], [41, 648, '8'], [42, 445, '9', true], [43, 245, '1'],
    [44, 415, '2'], [45, 530, '3'], [46, 410, '4'], [47, 183, '5'], [47.5, 522, '6']
  ].forEach(function(c) { count.apply(null, c); });

  curve(k, [46, 1258, 48, 1243], y, '#45205a', 3);
  curve(k, [30.2, 1260, 34, 1240, 37, 1222, 39, 1210, 41, 1192, 43, 1163, 46, 1135, 48, 1098], y, '#4676a6', 3);
  curve(k, [9, 1257, 12, 1240, 14, 1220, 17, 1210, 20, 1198, 24, 1199, 28, 1197, 32, 1195, 36, 1180, 39, 1160, 41, 1145, 43, 1100, 45, 1070, 46, 1052, 47, 1025, 48, 990], y, '#80c05a', 3);
  curve(k, [3, 1238, 5, 1225, 8, 1215, 12, 1205, 16, 1190, 20, 1193, 24, 1203, 28, 1195, 32, 1187, 36, 1170, 38, 1160, 40, 1138, 41, 1120, 42, 1090, 43, 1050, 44, 1030, 45, 1005, 46, 975, 47, 935, 48, 880], y, '#dd6878', 3);
  curve(k, [0, 1200, 2, 1192, 4, 1185, 6, 1185, 8, 1197, 10, 1207, 14, 1207, 16, 1200, 20, 1193, 24, 1202, 26, 1210, 29, 1207, 31, 1190, 33, 1168, 34, 1150, 36, 1135, 38, 1115, 39, 1097, 40, 1080, 41, 1048, 42, 985, 43, 925, 44, 895, 45, 860, 46, 812, 47, 735, 48, 653], y, '#dba03f', 3);
  curve(k, [0, 1168, 1, 1170, 2, 1180, 4, 1188, 6, 1198, 8, 1209, 12, 1213, 14, 1194, 16, 1181, 19, 1178, 21, 1196, 22, 1210, 23, 1224, 24, 1236, 25, 1228, 27, 1210, 28, 1195, 29, 1175, 30, 1163, 32, 1156, 33, 1148, 34, 1130, 35, 1123, 36, 1112, 37, 1095, 38, 1075, 39, 1055, 40, 1030, 41, 975, 42, 880, 43, 785, 44, 735, 45, 690, 46, 640, 47, 585, 48, 520], y, '#111', 3.5);

  // high / low marks
  el(k, 'path', { d: 'M669 15.3H727M707 4L727 15.3L707 26', fill: 'none', stroke: '#000', 'stroke-width': 3 });
  label(k, '11.57', 557, 35, 36, '#000', 87);
  el(k, 'path', { d: 'M411 530.5H353M373 519L353 530.5L373 541', fill: 'none', stroke: '#000', 'stroke-width': 3 });
  label(k, '6.66', 437, 541, 36, '#000', 69);

  // round buttons
  var icons = [
    [51.7, 'M16-19L-4 0L16 19M-2-19L-21 0L-2 19'], [175, 'M0-19V19M-19 0H19'], [297.7, 'M-19 0H19'],
    [421, 'M7-19L-13 0L7 19'], [544, 'M-6-19L14 0L-6 19'], [667, 'M-20-2V-20H-2M20 1V19H1']
  ];
  icons.forEach(function(b) {
    el(k, 'circle', { cx: b[0], cy: 493, r: 42, fill: '#e9e9e9', opacity: 0.8 });
    el(k, 'path', { d: b[1], transform: 'translate(' + b[0] + ' 493)', fill: 'none', stroke: '#555', 'stroke-width': 4 });
  });
  el(k, 'rect', { x: 1, y: 1, width: 744, height: 544, fill: 'none', stroke: '#e8e8e8', 'stroke-width': 2 });

  /* ---- dates ---- */
  var axis = document.getElementById('axis');
  for (var i = 15; i < 49; i++) {
    var major = i == 22 || i == 35 || i == 48;
    el(axis, 'line', { x1: x(i), x2: x(i), y1: 0, y2: major ? 17 : 11, stroke: '#888', 'stroke-width': major ? 4 : 2.5, opacity: major ? 1 : Math.min(1, (i - 14) / 6) });
  }
  label(axis, '2025-05-15', 1, 61, 40, '#666', 224, 500);
  label(axis, '06-17', 282, 61, 40, '#808080', 112, 500);
  label(axis, '07-04', 477, 61, 40, '#808080', 112, 500);
  label(axis, '07-23', 633, 61, 40, '#808080', 111, 500);

  /* ---- indicator 1 ---- */
  var p = document.getElementById('pull');
  function y1(v) { return v / 3 - 24; }
  hline(p, y1(402), '#e6e6e6', 2, '4 4');
  hline(p, y1(303), '#ccc', 3, '', 7, 728);
  label(p, '建仓', 148, 108, 33, '#ffff55', 0, 700);
  label(p, '建仓', 418, 108, 33, '#ffff55', 0, 700);
  [['终', 221, 108], ['终', 640, 108], ['终', 654, 108], ['终', 669, 108], ['始', 116, 210], ['始', 340, 210],
    ['始', 356, 210], ['始', 371, 210], ['始', 386, 210]].forEach(function(t) { label(p, t[0], t[1], t[2], 32, '#888'); });
  series(p, [510, 635, 627, 597, 565, 625, 690, 655, 570, 540, 460, 415, 385, 320, 437, 400, 372, 462, 495, 560, 655, 692, 692, 712, 720,
    590, 500, 430, 380, 373, 363, 435, 545, 485, 465, 510, 498, 430, 445, 417, 397, 328, 290, 312, 420, 548, 535, 412, 365], y1, '#cc4a42', 3);
  hline(p, y1(698), '#4c9638', 4, '', 7, 728);
  curve(p, [0, 732, 6, 732, 7, 395, 8, 732, 24, 732, 25, 395, 26, 732, 48, 732], y1, BLUE, 7);
  curve(p, [0, 732, 5, 732, 6, 627, 7, 732, 22, 732, 23, 627, 24, 627, 25, 732, 48, 732], y1, '#222428', 7);

  /* ---- indicator 2 ---- */
  var m = document.getElementById('main-force');
  function y2(v) { return v / 3 - 260; }
  hline(m, y2(1110), '#e6e6e6', 2, '4 4');
  hline(m, 219, '#4c9638', 4, '', 7, 728);
  [['始', 536, 92], ['始', 580, 92], ['终', 685, 92], ['始', 730, 92], ['终', 505, 127], ['终', 550, 123], ['始', 401, 195]]
    .forEach(function(t) { label(m, t[0], t[1], t[2], 32, '#888'); });
  series(m, [1020, 1050, 1070, 1070, 1066, 1100, 1145, 1157, 1152, 1155, 1152, 1172, 1198, 1205, 1240, 1222, 1200, 1220, 1202, 1202, 1265,
    1313, 1328, 1347, 1370, 1270, 1185, 1120, 1070, 1055, 1050, 1075, 1105, 1072, 1058, 1070, 1070, 1025, 1022, 1010, 1000, 970, 947, 960,
    1025, 1087, 1075, 1025, 985], y2, '#ea883c', 6);
  curve(m, [0, 985, 2, 1005, 4, 1030, 6, 1065, 7, 1080, 8, 1095, 9, 1105, 10, 1110, 12, 1118, 14, 1125, 16, 1118, 17, 1120, 19, 1140,
    20, 1180, 21, 1225, 22, 1270, 23, 1320, 24, 1362, 25, 1370, 26, 1355, 27, 1310, 28, 1240, 29, 1165, 30, 1115, 31, 1085, 32, 1073,
    33, 1067, 34, 1058, 36, 1058, 37, 1045, 38, 1040, 39, 1030, 40, 1018, 41, 995, 42, 980, 43, 968, 44, 968, 45, 985, 46, 1005,
    47, 1025, 48, 1035], y2, '#999', 6);

  /* ---- KDJ ---- */
  var kdj = document.getElementById('kdj');
  function y3(v) { return v / 3 - 16; }
  hline(kdj, y3(378), '#e6e6e6', 2, '4 4');
  series(kdj, [385, 450, 475, 485, 497, 540, 580, 573, 555, 558, 530, 508, 468, 400, 416, 378, 357, 387, 395, 435, 500, 540, 560, 580, 598,
    530, 480, 440, 402, 387, 373, 384, 397, 371, 364, 390, 397, 370, 372, 360, 348, 315, 292, 299, 345, 392, 380, 338, 316], y3, '#2e2e2e', 3.5);
  curve(kdj, [0, 370, 1, 395, 3, 440, 4, 463, 5, 485, 6, 520, 7, 538, 9, 548, 10, 543, 11, 532, 12, 512, 13, 475, 14, 453, 15, 430,
    16, 405, 17, 400, 18, 398, 19, 410, 20, 440, 22, 505, 24, 552, 25, 545, 26, 525, 28, 465, 29, 440, 30, 417, 31, 406, 32, 406,
    34, 385, 36, 387, 37, 381, 39, 375, 40, 363, 41, 346, 42, 328, 43, 319, 44, 328, 45, 352, 46, 358, 47, 350, 48, 340], y3, '#de7b4d', 3.5);
  series(kdj, [417, 558, 581, 570, 567, 640, 705, 648, 578, 581, 500, 465, 390, 255, 340, 283, 262, 362, 397, 485, 625, 672, 672, 690, 695,
    510, 393, 325, 276, 282, 283, 335, 392, 332, 320, 390, 412, 342, 362, 332, 315, 247, 222, 260, 390, 477, 420, 300, 267], y3, '#b9527d', 3.5);
})();
```
